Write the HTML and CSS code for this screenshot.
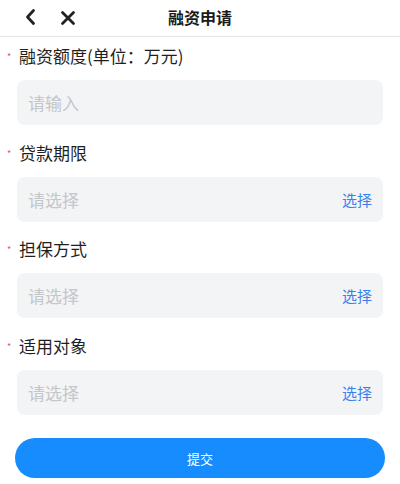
FILE: index.html
```html
<!DOCTYPE html>
<html lang="zh">
<head>
<meta charset="utf-8">
<link rel="stylesheet" href="styles.css">
</head>
<body>
<div class="header">
  <div class="header-icons">
    <svg class="icon" width="14" height="18" viewBox="0 0 14 18"><path d="M9.5 2.5 L3.5 9 L9.5 15.5" fill="none" stroke="#222" stroke-width="2.8" stroke-linecap="round" stroke-linejoin="round"/></svg>
    <svg class="icon icon-close" width="16" height="16" viewBox="0 0 16 16"><path d="M2.5 2.5 L13.5 13.5 M13.5 2.5 L2.5 13.5" fill="none" stroke="#222" stroke-width="2.8" stroke-linecap="round"/></svg>
  </div>
  <div class="title">融资申请</div>
</div>
<div class="form">
  <div class="field first">
    <div class="label"><span class="star">*</span>融资额度(单位：万元)</div>
    <div class="box"><span class="ph">请输入</span></div>
  </div>
  <div class="field">
    <div class="label"><span class="star">*</span>贷款期限</div>
    <div class="box"><span class="ph">请选择</span><span class="pick">选择</span></div>
  </div>
  <div class="field">
    <div class="label"><span class="star">*</span>担保方式</div>
    <div class="box"><span class="ph">请选择</span><span class="pick">选择</span></div>
  </div>
  <div class="field">
    <div class="label"><span class="star">*</span>适用对象</div>
    <div class="box"><span class="ph">请选择</span><span class="pick">选择</span></div>
  </div>
  <div class="btn">提交</div>
</div>
</body>
</html>
```
FILE: styles.css
```css
html, body {
  margin: 0;
  padding: 0;
  background: #fff;
  font-family: "Noto Sans CJK SC", "Noto Sans", sans-serif;
}
.header {
  height: 36px;
  border-bottom: 1px solid #e6e6e6;
  position: relative;
  display: flex;
  align-items: center;
  justify-content: center;
}
.header-icons {
  position: absolute;
  left: 24px;
  top: 8px;
  display: flex;
  align-items: center;
  gap: 22px;
}
.icon { display: block; }
.icon-close { margin-top: 1px; }
.title {
  font-size: 16px;
  font-weight: bold;
  color: #1a1a1a;
  line-height: 34px;
  padding-bottom: 2px;
}
.field { margin-top: 16.5px; }
.field.first { margin-top: 8px; }
.label {
  height: 24px;
  line-height: 22px;
  font-size: 17px;
  color: #1f1f1f;
  display: flex;
  align-items: flex-start;
  padding-left: 7px;
}
.star {
  color: #f05050;
  font-size: 9px;
  width: 12px;
  line-height: 9px;
  margin-top: 7px;
}
.box {
  margin: 11px 17px 0 17px;
  height: 45px;
  background: #f3f4f6;
  border-radius: 8px;
  display: flex;
  align-items: center;
  justify-content: space-between;
  padding: 0 11px 0 11px;
}
.ph {
  font-size: 17px;
  color: #c4c6ca;
}
.pick {
  font-size: 15px;
  color: #3b7fef;
}
.btn {
  margin: 23.5px 15px 0 15px;
  height: 40px;
  border-radius: 20px;
  background: #168cff;
  color: #fff;
  font-size: 13px;
  display: flex;
  align-items: center;
  justify-content: center;
}
```
